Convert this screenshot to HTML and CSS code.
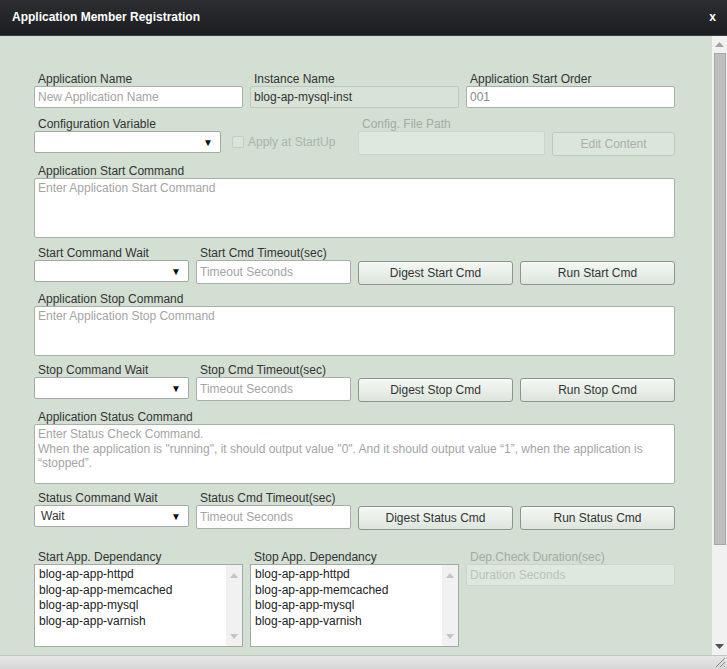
FILE: index.html
```html
<!DOCTYPE html>
<html>
<head>
<meta charset="utf-8">
<link rel="stylesheet" href="styles.css">
</head>
<body>
<div class="dialog">
  <div class="titlebar">
    <span class="title">Application Member Registration</span>
    <span class="close">x</span>
  </div>
  <div class="main">
    <div class="content">
      <div class="row cols3 gap10">
        <div class="field"><label class="lbl">Application Name</label><input class="input" placeholder="New Application Name"></div>
        <div class="field"><label class="lbl">Instance Name</label><input class="input readonly" value="blog-ap-mysql-inst" disabled></div>
        <div class="field"><label class="lbl">Application Start Order</label><input class="input grey" value="001"></div>
      </div>
      <div class="row cols-cfg gap9">
        <div class="field"><label class="lbl">Configuration Variable</label><div class="select"><span class="sel-text"></span><span class="arrow">&#9660;</span></div></div>
        <div class="field"><label class="lbl">&nbsp;</label><div class="check"><span class="box"></span><span class="check-text">Apply at StartUp</span></div></div>
        <div class="field"><label class="lbl dim">Config. File Path</label><input class="input disabled tall" disabled></div>
        <div class="field"><label class="lbl">&nbsp;</label><button class="btn off" disabled>Edit Content</button></div>
      </div>
      <div class="row gap9">
        <div class="field"><label class="lbl">Application Start Command</label><textarea class="area h60" placeholder="Enter Application Start Command"></textarea></div>
      </div>
      <div class="row cols4 gap8">
        <div class="field"><label class="lbl">Start Command Wait</label><div class="select"><span class="sel-text"></span><span class="arrow">&#9660;</span></div></div>
        <div class="field"><label class="lbl">Start Cmd Timeout(sec)</label><input class="input tall" placeholder="Timeout Seconds"></div>
        <div class="field"><label class="lbl">&nbsp;</label><button class="btn">Digest Start Cmd</button></div>
        <div class="field"><label class="lbl">&nbsp;</label><button class="btn">Run Start Cmd</button></div>
      </div>
      <div class="row gap8">
        <div class="field"><label class="lbl">Application Stop Command</label><textarea class="area h50" placeholder="Enter Application Stop Command"></textarea></div>
      </div>
      <div class="row cols4 gap9">
        <div class="field"><label class="lbl">Stop Command Wait</label><div class="select"><span class="sel-text"></span><span class="arrow">&#9660;</span></div></div>
        <div class="field"><label class="lbl">Stop Cmd Timeout(sec)</label><input class="input tall" placeholder="Timeout Seconds"></div>
        <div class="field"><label class="lbl">&nbsp;</label><button class="btn">Digest Stop Cmd</button></div>
        <div class="field"><label class="lbl">&nbsp;</label><button class="btn">Run Stop Cmd</button></div>
      </div>
      <div class="row gap8">
        <div class="field"><label class="lbl">Application Status Command</label><textarea class="area h60" placeholder="Enter Status Check Command.
When the application is &quot;running&quot;, it should output value &quot;0&quot;. And it should output value “1”, when the application is “stopped”."></textarea></div>
      </div>
      <div class="row cols4 gap21">
        <div class="field"><label class="lbl">Status Command Wait</label><div class="select"><span class="sel-text">Wait</span><span class="arrow">&#9660;</span></div></div>
        <div class="field"><label class="lbl">Status Cmd Timeout(sec)</label><input class="input tall" placeholder="Timeout Seconds"></div>
        <div class="field"><label class="lbl">&nbsp;</label><button class="btn">Digest Status Cmd</button></div>
        <div class="field"><label class="lbl">&nbsp;</label><button class="btn">Run Status Cmd</button></div>
      </div>
      <div class="row cols3">
        <div class="field"><label class="lbl">Start App. Dependancy</label>
          <div class="listbox">
            <div class="items">
              <div class="item">blog-ap-app-httpd</div>
              <div class="item">blog-ap-app-memcached</div>
              <div class="item">blog-ap-app-mysql</div>
              <div class="item">blog-ap-app-varnish</div>
            </div>
            <div class="lscroll">
              <svg width="8" height="5" viewBox="0 0 8 5"><path d="M0 5 L4 0 L8 5 Z" fill="#c4c4c4"/></svg>
              <svg width="8" height="5" viewBox="0 0 8 5"><path d="M0 0 L4 5 L8 0 Z" fill="#c4c4c4"/></svg>
            </div>
          </div>
        </div>
        <div class="field"><label class="lbl">Stop App. Dependancy</label>
          <div class="listbox">
            <div class="items">
              <div class="item">blog-ap-app-httpd</div>
              <div class="item">blog-ap-app-memcached</div>
              <div class="item">blog-ap-app-mysql</div>
              <div class="item">blog-ap-app-varnish</div>
            </div>
            <div class="lscroll">
              <svg width="8" height="5" viewBox="0 0 8 5"><path d="M0 5 L4 0 L8 5 Z" fill="#c4c4c4"/></svg>
              <svg width="8" height="5" viewBox="0 0 8 5"><path d="M0 0 L4 5 L8 0 Z" fill="#c4c4c4"/></svg>
            </div>
          </div>
        </div>
        <div class="field"><label class="lbl dim">Dep.Check Duration(sec)</label><input class="input disabled" placeholder="Duration Seconds" disabled></div>
      </div>
    </div>
    <div class="vscroll">
      <div class="vs-btn"><svg width="9" height="5" viewBox="0 0 9 5"><path d="M0 5 L4.5 0 L9 5 Z" fill="#a3a3a3"/></svg></div>
      <div class="vs-track"><div class="vs-thumb"></div></div>
      <div class="vs-btn"><svg width="9" height="5" viewBox="0 0 9 5"><path d="M0 0 L4.5 5 L9 0 Z" fill="#505050"/></svg></div>
    </div>
  </div>
  <div class="footer">
    <svg class="grip" width="12" height="12" viewBox="0 0 12 12">
      <path d="M11 2 L2 11 M11 6 L6 11 M11 10 L10 11" stroke="#8a8a8a" stroke-width="1"/>
    </svg>
  </div>
</div>
</body>
</html>
```

FILE: styles.css
```css
* { box-sizing: border-box; }
html, body { margin: 0; padding: 0; }
body {
  width: 727px;
  height: 669px;
  overflow: hidden;
  font-family: "Liberation Sans", Arial, sans-serif;
  font-size: 12px;
  color: #333;
  background: #d3dfd3;
}
.dialog {
  width: 727px;
  height: 669px;
  display: flex;
  flex-direction: column;
}
.titlebar {
  height: 36px;
  flex: none;
  background: linear-gradient(#2c2e31, #1b1d1f);
  border-bottom: 1px solid #3a3c3e;
  display: flex;
  align-items: center;
  justify-content: space-between;
  padding: 0 11px 0 12px;
  color: #fff;
}
.title {
  font-weight: bold;
  font-size: 12px;
  white-space: nowrap;
  margin-top: -1px;
}
.close {
  font-weight: bold;
  font-size: 12px;
  margin-top: -2px;
}
.main {
  flex: 1;
  display: flex;
  min-height: 0;
}
.content {
  flex: 1;
  overflow: hidden;
  padding: 37px 37px 0 34px;
  background: #d3dfd3;
}
.row { display: grid; column-gap: 7px; align-items: start; }
.cols3 { grid-template-columns: 209px 209px 209px; }
.cols4 { grid-template-columns: 155px 155px 155px 155px; }
.cols-cfg { grid-template-columns: 187px 123px 187px 123px; }
.gap7 { margin-bottom: 7px; }
.gap8 { margin-bottom: 8px; }
.gap9 { margin-bottom: 9px; }
.gap10 { margin-bottom: 10px; }
.gap21 { margin-bottom: 21px; }
.field { display: flex; flex-direction: column; }
.lbl {
  display: block;
  height: 13px;
  line-height: 13px;
  padding-left: 4px;
  color: #333;
  white-space: nowrap;
}
.lbl.dim { color: #a3aba3; }
.input {
  height: 22px;
  width: 100%;
  border: 1px solid #a9aea9;
  border-radius: 2px;
  background: #fff;
  font-family: inherit;
  font-size: 12px;
  color: #333;
  padding: 0 3px;
  outline: none;
  margin: 0;
}
.input.tall { height: 24px; }
.input::placeholder { color: #a4a4a4; }
.input.grey { color: #8a8a8a; }
.input.readonly {
  background: #d8e2d8;
  border-color: #bcc8bc;
  color: #333;
}
.input.disabled {
  background: #dfe8df;
  border-color: #cbd5cb;
}
.input.disabled::placeholder { color: #b9c2b9; }
.select {
  height: 22px;
  background: #fff;
  border: 1px solid #a4a9a4;
  border-radius: 2px;
  display: flex;
  align-items: center;
  justify-content: space-between;
  padding: 0 7px 0 6px;
}
.arrow { font-size: 10px; color: #111; }
.check {
  display: flex;
  align-items: center;
  height: 22px;
  padding-left: 4px;
  gap: 4px;
  color: #aab4aa;
}
.box {
  width: 12px;
  height: 12px;
  border: 1px solid #c3ccc3;
  border-radius: 2px;
  background: #dbe4db;
}
.btn {
  height: 24px;
  margin-top: 1px;
  width: 100%;
  border: 1px solid #8f938f;
  border-radius: 3px;
  background: linear-gradient(#f5f8f5, #dce5dc);
  font-family: inherit;
  font-size: 12px;
  color: #333;
  padding: 0;
}
.btn.off {
  color: #a8b0a8;
  border-color: #bec7be;
  background: #dce5dc;
}
.area {
  display: block;
  width: 100%;
  resize: none;
  border: 1px solid #a9aea9;
  border-radius: 2px;
  background: #fff;
  font-family: inherit;
  font-size: 12px;
  line-height: 14.5px;
  padding: 2px 3px;
  margin: 0;
  outline: none;
  overflow: hidden;
}
.area::placeholder { color: #a4a4a4; }
.h60 { height: 60px; }
.h50 { height: 50px; }
.listbox {
  height: 83px;
  background: #fff;
  border: 1px solid #a4a9a4;
  display: flex;
}
.items {
  flex: 1;
  padding: 2px 0 0 4px;
  color: #222;
}
.item { height: 15.5px; line-height: 15.5px; font-size: 12px; }
.lscroll {
  width: 16px;
  background: #f1f1f1;
  display: flex;
  flex-direction: column;
  justify-content: space-between;
  align-items: center;
  padding: 8px 0 7px;
}
.lscroll svg { display: block; }
.vscroll {
  width: 15px;
  flex: none;
  background: #f1f1f1;
  display: flex;
  flex-direction: column;
}
.vs-btn {
  height: 17px;
  display: flex;
  align-items: center;
  justify-content: center;
}
.vs-btn svg { display: block; }
.vs-track { flex: 1; padding: 0 1px 0 2px; }
.vs-thumb {
  height: 492px;
  background: #bebebe;
  border: 1px solid #a6a6a6;
}
.footer {
  height: 14px;
  flex: none;
  background: linear-gradient(#e6e6e6, #d6d6d6);
  border-top: 1px solid #c4c4c4;
  display: flex;
  justify-content: flex-end;
  align-items: flex-end;
}
.grip { display: block; margin: 0 1px 1px 0; }
```
